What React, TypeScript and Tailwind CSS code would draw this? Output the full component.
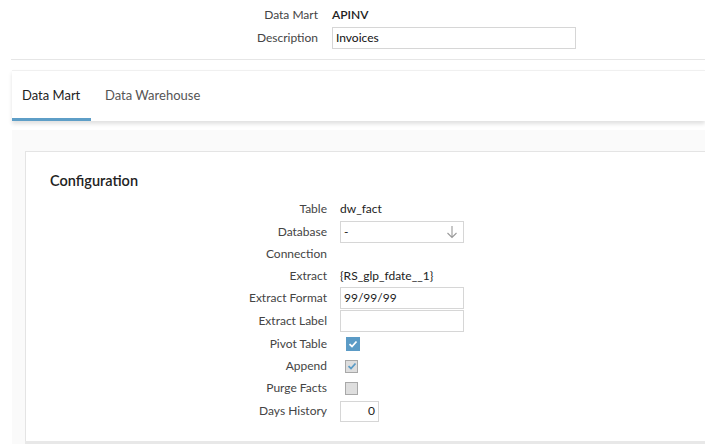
import React from "react";

const Check = ({ color }: { color: string }) => (
  <svg width="10" height="10" viewBox="0 0 10 10">
    <path d="M1.5 5.2 L4 7.5 L8.5 2.5" fill="none" stroke={color} strokeWidth="1.8" />
  </svg>
);

const Row = ({ label, h, children }: { label: string; h: string; children?: React.ReactNode }) => (
  <div className={`flex items-center ${h}`}>
    <div className="w-[277px] text-right text-[12px] text-[#444]">{label}</div>
    <div className="ml-[13px] flex items-center text-[12px] text-[#222]">{children}</div>
  </div>
);

export default function App() {
  return (
    <div className="w-[705px] h-[444px] overflow-hidden bg-white" style={{ fontFamily: "Lato, 'Noto Sans', sans-serif" }}>
      {/* header */}
      <div className="pt-[5px] pb-[10px]">
        <div className="flex items-center h-[20px]">
          <div className="w-[318px] text-right text-[12px] text-[#444]">Data Mart</div>
          <div className="ml-[14px] text-[12px] font-semibold text-[#222]">APINV</div>
        </div>
        <div className="flex items-center mt-[2px]">
          <div className="w-[318px] text-right text-[12px] text-[#444]">Description</div>
          <div className="ml-[14px] w-[244px] h-[22px] border border-[#d6d6d6] flex items-center px-[3px] text-[12px] text-[#111]">Invoices</div>
        </div>
      </div>
      <div className="ml-[11px] border-t border-[#e6e6e6]" />
      <div className="pl-[12px] pt-[10px]">
        {/* tabs */}
        <div className="bg-white h-[51px] flex items-end shadow-[0_3px_4px_rgba(0,0,0,0.12)] border-t border-[#f0f0f0]">
          <div className="w-[79px] h-full flex flex-col">
            <div className="flex-1 flex items-center pl-[10px] pt-[2px] text-[13px] text-[#222]">Data Mart</div>
            <div className="h-[3px] bg-[#5e9ec7]" />
          </div>
          <div className="h-full flex items-center pb-[1px] pl-[14px] text-[13px] text-[#555]">Data Warehouse</div>
        </div>
        {/* gray area */}
        <div className="mt-[9px] bg-[#fafafa] pl-[13px] pt-[21px]">
          <div className="bg-white border-l border-t border-[#e4e4e4] h-[290px] pl-[24px] pt-[19px]">
            <div className="text-[14.5px] font-semibold text-[#222] h-[20px] leading-[20px]">Configuration</div>
            <div className="mt-[7px]">
              <Row label="Table" h="h-[22px]">dw_fact</Row>
              <Row label="Database" h="h-[23px]">
                <div className="w-[124px] h-[22px] border border-[#d6d6d6] flex items-center justify-between px-[3px]">
                  <span>-</span>
                  <svg width="14" height="14" viewBox="0 0 14 14" className="mr-[1px]">
                    <path d="M7 1 V12.5 M2.5 8 L7 12.5 L11.5 8" fill="none" stroke="#9a9a9a" strokeWidth="1.1" />
                  </svg>
                </div>
              </Row>
              <Row label="Connection" h="h-[22px]" />
              <Row label="Extract" h="h-[21px]">{"{RS_glp_fdate__1}"}</Row>
              <Row label="Extract Format" h="h-[23px]">
                <div className="w-[124px] h-[22px] border border-[#d6d6d6] flex items-center px-[3px]">99/99/99</div>
              </Row>
              <Row label="Extract Label" h="h-[24px]">
                <div className="w-[124px] h-[22px] border border-[#d6d6d6]" />
              </Row>
              <Row label="Pivot Table" h="h-[22px]">
                <div className="ml-[6px] w-[14px] h-[14px] bg-[#5b9bc6] flex items-center justify-center">
                  <Check color="#fff" />
                </div>
              </Row>
              <Row label="Append" h="h-[22px]">
                <div className="ml-[5px] w-[13px] h-[13px] bg-[#dedede] border border-[#a8a8a8] flex items-center justify-center">
                  <Check color="#5b9bc6" />
                </div>
              </Row>
              <Row label="Purge Facts" h="h-[22px]">
                <div className="ml-[5px] w-[13px] h-[13px] bg-[#dedede] border border-[#a8a8a8]" />
              </Row>
              <Row label="Days History" h="h-[24px]">
                <div className="w-[39px] h-[21px] border border-[#d6d6d6] flex items-center justify-end pr-[3px]">0</div>
              </Row>
            </div>
          </div>
          <div className="h-[3px] bg-[#e8e8e8]" />
        </div>
      </div>
    </div>
  );
}
